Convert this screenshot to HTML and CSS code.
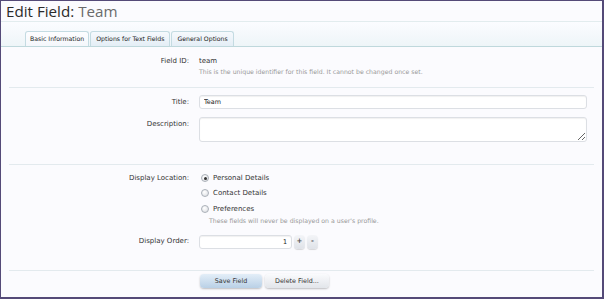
FILE: index.html
```html
<!DOCTYPE html>
<html lang="en">
<head>
  <meta charset="UTF-8" />
  <title>Edit Field: Team</title>
  <link rel="stylesheet" href="styles.css">
</head>
<body>
  <div class="frame">
    <h1 class="title">Edit Field: <span class="title-name">Team</span></h1>

    <!-- Tabs -->
    <div class="tab-bar">
      <ul class="tabs">
        <li class="tab active">Basic Information</li>
        <li class="tab">Options for Text Fields</li>
        <li class="tab">General Options</li>
      </ul>
    </div>

    <form class="edit-form">
      <div class="section section-id">
        <div class="row">
          <label class="row-label">Field ID:</label>
          <div class="row-control">
            <div class="value">team</div>
            <p class="hint">This is the unique identifier for this field. It cannot be changed once set.</p>
          </div>
        </div>
      </div>

      <div class="section section-inputs">
        <div class="row">
          <label class="row-label" for="title">Title:</label>
          <div class="row-control">
            <input type="text" id="title" class="text-input" value="Team" />
          </div>
        </div>
        <div class="row">
          <label class="row-label" for="description">Description:</label>
          <div class="row-control">
            <textarea id="description" class="text-area"></textarea>
          </div>
        </div>
      </div>

      <div class="section section-location">
        <div class="row">
          <label class="row-label">Display Location:</label>
          <div class="row-control">
            <label class="radio"><span class="radio-dot checked"></span>Personal Details</label>
            <label class="radio"><span class="radio-dot"></span>Contact Details</label>
            <label class="radio"><span class="radio-dot"></span>Preferences</label>
            <p class="hint hint-indent">These fields will never be displayed on a user's profile.</p>
          </div>
        </div>
        <div class="row row-order">
          <label class="row-label" for="order">Display Order:</label>
          <div class="row-control spinner">
            <input type="text" id="order" class="text-input number-input" value="1" />
            <span class="spin-btn">+</span>
            <span class="spin-btn">-</span>
          </div>
        </div>
      </div>

      <div class="submit-row">
        <button type="button" class="button primary">Save Field</button>
        <button type="button" class="button">Delete Field...</button>
      </div>
    </form>
  </div>
</body>
</html>
```

FILE: styles.css
```css
* {
  box-sizing: border-box;
}
html, body {
  margin: 0;
  padding: 0;
}
body {
  font-family: 'DejaVu Sans', Verdana, sans-serif;
  font-size: 7px;
  color: #222;
  background: #fff;
}
.frame {
  width: 604px;
  height: 299px;
  border-top: 1px solid #544a78;
  border-left: 1px solid #544a78;
  border-right: 2px solid #544a78;
  border-bottom: 2px solid #544a78;
  background: #fbfbfe;
  overflow: hidden;
}
.title {
  margin: 0;
  height: 21px;
  padding: 1px 0 0 5px;
  font-family: 'Open Sans', 'DejaVu Sans', sans-serif;
  font-size: 15.2px;
  font-weight: 400;
  line-height: 18px;
  color: #2b2b2b;
  border-bottom: 1px solid #e2ecee;
}
.title-name {
  color: #6a6a6a;
}
/* Tabs */
.tab-bar {
  height: 25px;
  padding: 9px 0 0 24px;
  background: linear-gradient(to bottom, #fbfcff, #eef5f8);
  border-bottom: 1px solid #bfd8dc;
}
.tabs {
  list-style: none;
  margin: 0;
  padding: 0;
  display: flex;
  gap: 1px;
}
.tab {
  height: 15px;
  padding: 0 5px;
  line-height: 14px;
  font-size: 6.2px;
  color: #222;
  border: 1px solid #c4dbe2;
  border-bottom: none;
  border-radius: 3px 3px 0 0;
  background: linear-gradient(to bottom, #f6f9fd, #e4eef6);
}
.tab.active {
  padding: 0 4px;
  background: linear-gradient(to bottom, #fdfdff, #f4f7fb);
}
/* Form */
.section {
  border-bottom: 1px solid #e3eaee;
  margin: 0 8px;
}
.section-id {
  padding: 8px 0 11px;
}
.section-inputs {
  padding: 7px 0 22px;
}
.section-location {
  padding: 7px 0 21px;
}
.row {
  display: flex;
  align-items: flex-start;
}
.row + .row {
  margin-top: 8px;
}
.row.row-order {
  margin-top: 10px;
}
.row-label {
  width: 190px;
  padding-right: 10px;
  text-align: right;
  color: #333;
  line-height: 12px;
}
.section-inputs .row-label {
  padding-top: 1px;
}
.row-control {
  flex: 1;
  padding-right: 7px;
}
.value {
  line-height: 12px;
  color: #333;
}
.hint {
  margin: 0;
  font-size: 6.2px;
  line-height: 9px;
  color: #999;
}
.hint-indent {
  padding-left: 10px;
  margin-top: -1px;
}
.text-input,
.text-area {
  display: block;
  width: 100%;
  margin: 0;
  font-family: inherit;
  font-size: 6.4px;
  color: #222;
  background: #fff;
  border: 1px solid #dcdfe4;
  border-radius: 3px;
  box-shadow: inset 0 1px 1px rgba(0,0,0,0.06);
  outline: none;
}
.text-input {
  height: 14px;
  padding: 0 4px;
}
.text-area {
  height: 25px;
  resize: vertical;
  padding: 2px 4px;
}
/* Radios */
.radio {
  display: flex;
  align-items: center;
  height: 16px;
  color: #333;
  line-height: 12px;
}
.radio:first-child {
  height: 12px;
  margin-bottom: 1px;
}
.radio-dot {
  width: 8px;
  height: 8px;
  margin: 0 4px 0 2px;
  border: 1px solid #aab0b8;
  border-radius: 50%;
  background: radial-gradient(circle at 40% 35%, #fff, #d8dbe0);
  position: relative;
}
.radio-dot.checked::after {
  content: '';
  position: absolute;
  left: 1.5px;
  top: 1.5px;
  width: 3px;
  height: 3px;
  border-radius: 50%;
  background: #333;
}
/* Spinner */
.spinner {
  display: flex;
  align-items: center;
  gap: 2px;
}
.number-input {
  width: 93px;
  text-align: right;
}
.spin-btn {
  width: 11px;
  height: 14px;
  line-height: 13px;
  text-align: center;
  font-size: 7px;
  font-weight: bold;
  color: #555;
  border-radius: 4px;
  background: linear-gradient(to bottom, #f4f5f8, #dfe2e8);
  box-shadow: 0 1px 1px rgba(0,0,0,0.15);
}
/* Buttons */
.submit-row {
  display: flex;
  gap: 3px;
  padding: 3px 0 0 199px;
}
.button {
  height: 14px;
  padding: 0 10px;
  font-family: inherit;
  font-size: 6.4px;
  color: #333;
  border: none;
  border-radius: 4px;
  background: linear-gradient(to bottom, #fafbfd, #e2e5ea);
  box-shadow: 0 1px 2px rgba(0,0,0,0.25);
}
.button.primary {
  width: 62px;
  background: linear-gradient(to bottom, #e3eef8, #b9d0e6);
}
```
